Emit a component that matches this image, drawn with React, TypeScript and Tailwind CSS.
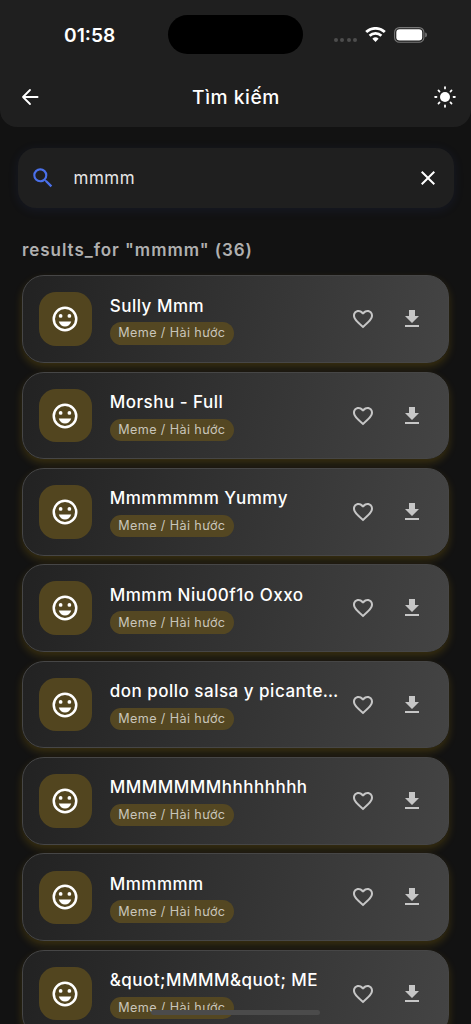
import type { ReactNode } from 'react';
import { MdClose, MdDownload, MdFavoriteBorder, MdSearch } from 'react-icons/md';

const sounds = [
  'Sully Mmm',
  'Morshu - Full',
  'Mmmmmmm Yummy',
  'Mmmm Niu00f1o Oxxo',
  'don pollo salsa y picante…',
  'MMMMMMMhhhhhhhh',
  'Mmmmmm',
  '&quot;MMMM&quot; ME',
];

const rays = [0, 45, 90, 135, 180, 225, 270, 315];

function BackIcon() {
  return (
    <svg
      className="h-6 w-6"
      viewBox="0 0 24 24"
      fill="none"
      stroke="currentColor"
      strokeWidth="1.8"
      strokeLinecap="round"
      strokeLinejoin="round"
      aria-hidden
    >
      <path d="M19.6 12H5M12 5 5 12l7 7" />
    </svg>
  );
}

function SunIcon() {
  return (
    <svg className="h-6 w-6" viewBox="0 0 24 24" fill="currentColor" aria-hidden>
      <circle cx="12" cy="12" r="5" />
      {rays.map((angle) => (
        <rect
          key={angle}
          x="11.1"
          y={angle % 90 ? 1.9 : 1.2}
          width="1.8"
          height="3.2"
          rx="0.8"
          transform={`rotate(${angle} 12 12)`}
        />
      ))}
    </svg>
  );
}

function SmileIcon() {
  return (
    <svg className="h-[30px] w-[30px]" viewBox="0 0 24 24" fill="currentColor" aria-hidden>
      <circle cx="12" cy="12" r="9" fill="none" stroke="currentColor" strokeWidth="2" />
      <circle cx="8.5" cy="9.5" r="1.5" />
      <circle cx="15.5" cy="9.5" r="1.5" />
      <path d="M12 18c2.3 0 4.3-1.6 5-4.1H7C7.700 16.4 9.700 18 12 18Z" />
    </svg>
  );
}

function WifiIcon() {
  return (
    <svg className="h-[15px] w-[21px]" viewBox="0 0 21 15" fill="none" stroke="#fff" aria-hidden>
      <path d="M1.2 5.1a13.4 13.4 0 0 1 18.6 0" strokeWidth="2.8" />
      <path d="M4.6 8.7a8.6 8.6 0 0 1 11.8 0" strokeWidth="2.7" />
      <path d="M10.5 15 7.4 11.8a4.5 4.5 0 0 1 6.2 0Z" fill="#fff" stroke="none" />
    </svg>
  );
}

function BatteryIcon() {
  return (
    <svg className="h-4 w-[34px]" viewBox="0 0 34 16" aria-hidden>
      <rect x="0.6" y="0.6" width="29.3" height="14.6" rx="4.8" fill="none" stroke="#777" strokeWidth="1.1" />
      <rect x="2.3" y="2.3" width="25.9" height="11.2" rx="3.2" fill="#fff" />
      <path d="M31.2 5.6c1.2.3 1.7 1.1 1.7 2.3s-.5 2-1.7 2.3Z" fill="#777" />
    </svg>
  );
}

function StatusBar() {
  return (
    <div className="flex h-[54px] pt-[15px]">
      <div className="w-[168px] pt-[6px] pl-[64px] text-[19.2px] leading-[28px] font-semibold">
        01:58
      </div>
      <div className="h-[39px] w-[135px] rounded-full bg-black" />
      <div className="flex items-start pt-3 pl-[31px]">
        <div className="mt-[11px] flex gap-[2.4px]">
          {[0, 1, 2, 3].map((dot) => (
            <span key={dot} className="h-1 w-1 rounded-full bg-[#4d4d4d]" />
          ))}
        </div>
        <div className="ml-2">
          <WifiIcon />
        </div>
        <div className="ml-2">
          <BatteryIcon />
        </div>
      </div>
    </div>
  );
}

function Header({ title }: { title: string }) {
  return (
    <header className="h-[126.5px] rounded-b-[17px] bg-[#1f1f1f]">
      <StatusBar />
      <div className="mt-[18px] flex h-[50px] items-center justify-between pr-[14px] pl-[18px]">
        <BackIcon />
        <h1 className="mr-[3px] text-[19.2px] font-medium tracking-[0.55px]">{title}</h1>
        <SunIcon />
      </div>
    </header>
  );
}

function ActionIcon({ children }: { children: ReactNode }) {
  return (
    <button className="flex h-[49px] w-[49px] shrink-0 items-center justify-center text-[#c6c6c6]">
      {children}
    </button>
  );
}

function SoundCard({ name }: { name: string }) {
  return (
    <li className="flex h-[87.6px] shrink-0 items-center rounded-[22px] border border-[#464646] bg-[linear-gradient(101.5deg,#222222,#444444)] pr-[12px] pl-[16px] shadow-[0_4px_8px_rgba(255,193,7,0.17)]">
      <div className="flex h-[53.5px] w-[53.5px] shrink-0 items-center justify-center rounded-[17px] bg-[#52451f]">
        <SmileIcon />
      </div>
      <div className="ml-[17.5px] flex w-[226px] shrink-0 flex-col items-start">
        <div className="text-[17px] leading-[24px] font-medium tracking-[0.5px] whitespace-nowrap">
          {name}
        </div>
        <span className="mt-[4.5px] flex h-[22.5px] items-center rounded-full bg-[#544722] px-[8.5px] pt-px text-[12.6px] tracking-[0.4px] text-[#c9c5ba]">
          Meme / Hài hước
        </span>
      </div>
      <div className="ml-auto flex">
        <ActionIcon>
          <MdFavoriteBorder className="h-6 w-6" />
        </ActionIcon>
        <ActionIcon>
          <MdDownload className="h-6 w-6" />
        </ActionIcon>
      </div>
    </li>
  );
}

export default function App() {
  return (
    <div className="relative h-[1024px] w-[471px] overflow-hidden bg-[#121212] font-['Inter',sans-serif] text-white">
      <Header title="Tìm kiếm" />
      <div className="mx-[17.5px] mt-[21.5px] flex h-[60px] items-center rounded-[18px] bg-[#1f1f1f] pr-[14px] pl-[12px] shadow-[0_2px_12px_rgba(67,97,238,0.09)]">
        <MdSearch className="h-[26px] w-[26px] text-[#4a70ea]" />
        <span className="ml-[18px] grow pt-[2px] text-[17px] tracking-[0.5px] text-[#e6e6e6]">mmmm</span>
        <MdClose className="h-6 w-6" />
      </div>
      <h2 className="mt-[30px] ml-[22px] text-[17px] leading-[24px] font-semibold tracking-[0.95px] text-[#b0b0b0]">
        results_for "mmmm" (36)
      </h2>
      <ul className="mx-[21.7px] mt-[13.4px] flex flex-col gap-[8.75px]">
        {sounds.map((name) => (
          <SoundCard key={name} name={name} />
        ))}
      </ul>
      <div className="absolute bottom-[9px] left-[151px] h-[5px] w-[169px] rounded-full bg-[#4b4b4b]" />
    </div>
  );
}
